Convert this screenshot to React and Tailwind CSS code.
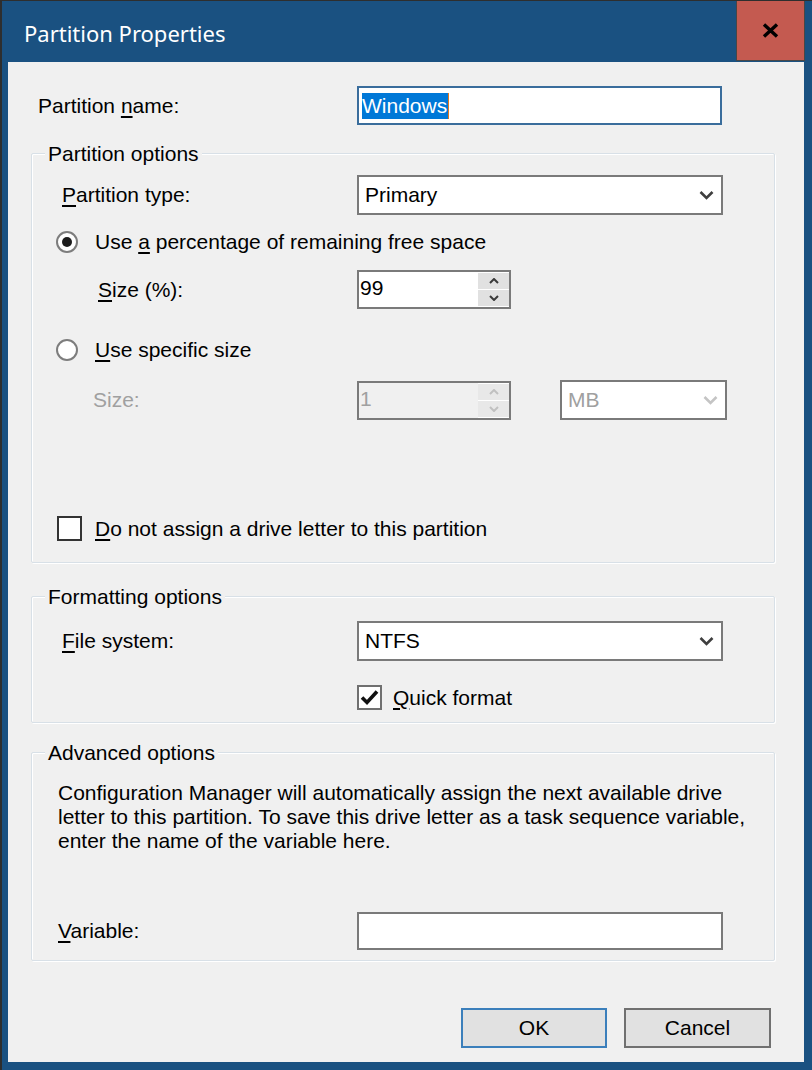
import React from "react";

function U({ children }) {
  return <span className="underline decoration-2 underline-offset-[3px]">{children}</span>;
}

function Chevron({ color = "#404040", up = false, small = false }) {
  if (small) {
    return (
      <svg width="10" height="6" viewBox="0 0 10 6" className="block">
        <path d={up ? "M1 5 L5 1 L9 5" : "M1 1 L5 5 L9 1"} fill="none" stroke={color} strokeWidth="2" />
      </svg>
    );
  }
  return (
    <svg width="15" height="10" viewBox="0 0 15 10" className="block">
      <path d="M1.5 2 L7.5 8 L13.5 2" fill="none" stroke={color} strokeWidth="2.6" />
    </svg>
  );
}

function Combo({ value, width = "w-[366px]", disabled = false }) {
  return (
    <div
      className={`${width} h-[40px] border-2 border-[#7a7a7a] bg-white flex items-center pl-[6px] pr-[7px] ${
        disabled ? "text-[#a0a0a0]" : "text-black"
      }`}
    >
      <span className="flex-1">{value}</span>
      <Chevron color={disabled ? "#c4c4c4" : "#3f3f3f"} />
    </div>
  );
}

function Spinner({ value, disabled = false }) {
  return (
    <div
      className={`w-[154px] h-[39px] border-2 border-[#7a7a7a] flex ${
        disabled ? "bg-[#f0f0f0] text-[#a0a0a0]" : "bg-white text-black"
      }`}
    >
      <div className="flex-1 flex items-center pl-[1px] pb-[3px]">{value}</div>
      <div className="w-[31px] flex flex-col gap-[1px] py-[1px] bg-white">
        <div className={`flex-1 flex items-center justify-center ${disabled ? "bg-[#e8e8e8]" : "bg-[#e1e1e1]"}`}>
          <Chevron small up color={disabled ? "#c0c0c0" : "#3a3a3a"} />
        </div>
        <div className={`flex-1 flex items-center justify-center ${disabled ? "bg-[#e8e8e8]" : "bg-[#e1e1e1]"}`}>
          <Chevron small color={disabled ? "#c0c0c0" : "#3a3a3a"} />
        </div>
      </div>
    </div>
  );
}

function Radio({ checked }) {
  return (
    <div className="w-[22px] h-[22px] rounded-full border-2 border-[#7d7d7d] bg-white flex items-center justify-center">
      {checked && <div className="w-[10px] h-[10px] rounded-full bg-[#1c1c1c]" />}
    </div>
  );
}

function Checkbox({ checked, border = "border-[#333333]" }) {
  return (
    <div className={`w-[25px] h-[25px] border-2 ${border} bg-white flex items-center justify-center`}>
      {checked && (
        <svg width="19" height="17" viewBox="0 0 19 17" className="block">
          <path d="M2 8.5 L7 13.5 L17 2.5" fill="none" stroke="#111" strokeWidth="3.6" />
        </svg>
      )}
    </div>
  );
}

function Group({ title, height, children }) {
  return (
    <div
      className={`relative ml-[23px] w-[744px] ${height} border border-[#d8e0e7] rounded-[2px] shadow-[inset_1px_1px_0_#ffffff,1px_1px_0_#ffffff]`}
    >
      <span className="absolute -top-[12px] left-[13px] px-[3px] bg-[#f0f0f0] leading-[24px]">{title}</span>
      {children}
    </div>
  );
}

export default function App() {
  return (
    <div className="w-[812px] h-[1070px] bg-[#1a5181] border-l-2 border-t border-[#2e2e2e] flex flex-col font-['Liberation_Sans',Arial,sans-serif] text-[21px] leading-[24px] text-black overflow-hidden">
      {/* title bar */}
      <div className="h-[61px] flex shrink-0">
        <div className="flex-1 flex items-center pl-[22px] pt-[3px] text-white text-[22px] font-['Noto_Sans',sans-serif]">
          Partition Properties
        </div>
        <div className="w-[69px] h-[60px] bg-[#c45a50] border-l border-b border-r border-[#474747] flex items-center justify-center">
          <svg width="17" height="15" viewBox="0 0 17 15" className="block">
            <path d="M2 1.5 L15 13.5 M15 1.5 L2 13.5" stroke="#000" strokeWidth="3.4" />
          </svg>
        </div>
        <div className="w-[7px]" />
      </div>

      {/* client area */}
      <div className="ml-[6px] w-[796px] h-[1000px] bg-[#f0f0f0] flex flex-col shrink-0">
        {/* name */}
        <div className="mt-[24px] h-[39px] flex items-center">
          <div className="pl-[30px] w-[349px]">
            Partition <U>n</U>ame:
          </div>
          <div className="w-[365px] h-[39px] border-2 border-[#3a6d9c] bg-white flex items-center pl-[3px]">
            <span className="bg-[#0078d7] text-white h-[26px] leading-[26px] pr-[1px] border-r border-[#e0781f]">
              Windows
            </span>
          </div>
        </div>

        {/* partition options */}
        <div className="mt-[28px]">
          <Group title="Partition options" height="h-[410px]">
            <div className="flex flex-col">
              <div className="mt-[21px] h-[40px] flex items-center">
                <div className="pl-[30px] w-[325px]">
                  <U>P</U>artition type:
                </div>
                <Combo value="Primary" />
              </div>

              <div className="mt-[16px] h-[22px] flex items-center">
                <div className="ml-[24px]">
                  <Radio checked />
                </div>
                <div className="ml-[17px]">
                  Use <U>a</U> percentage of remaining free space
                </div>
              </div>

              <div className="mt-[17px] h-[39px] flex items-center">
                <div className="pl-[66px] w-[325px]">
                  <U>S</U>ize (%):
                </div>
                <Spinner value="99" />
              </div>

              <div className="mt-[30px] h-[22px] flex items-center">
                <div className="ml-[24px]">
                  <Radio />
                </div>
                <div className="ml-[17px]">
                  <U>U</U>se specific size
                </div>
              </div>

              <div className="mt-[19px] h-[40px] flex items-center">
                <div className="pl-[61px] w-[325px] text-[#a0a0a0]">Size:</div>
                <Spinner value="1" disabled />
                <div className="ml-[49px]">
                  <Combo value="MB" width="w-[167px]" disabled />
                </div>
              </div>

              <div className="mt-[96px] h-[25px] flex items-center">
                <div className="ml-[25px]">
                  <Checkbox />
                </div>
                <div className="ml-[13px]">
                  <U>D</U>o not assign a drive letter to this partition
                </div>
              </div>
            </div>
          </Group>
        </div>

        {/* formatting options */}
        <div className="mt-[33px]">
          <Group title="Formatting options" height="h-[127px]">
            <div className="flex flex-col">
              <div className="mt-[24px] h-[40px] flex items-center">
                <div className="pl-[30px] w-[325px]">
                  <U>F</U>ile system:
                </div>
                <Combo value="NTFS" />
              </div>
              <div className="mt-[24px] h-[25px] flex items-center">
                <div className="ml-[325px]">
                  <Checkbox checked border="border-[#707070]" />
                </div>
                <div className="ml-[11px]">
                  <U>Q</U>uick format
                </div>
              </div>
            </div>
          </Group>
        </div>

        {/* advanced options */}
        <div className="mt-[29px]">
          <Group title="Advanced options" height="h-[209px]">
            <div className="flex flex-col">
              <p className="mt-[28px] pl-[26px] whitespace-nowrap">
                Configuration Manager will automatically assign the next available drive
                <br />
                letter to this partition. To save this drive letter as a task sequence variable,
                <br />
                enter the name of the variable here.
              </p>
              <div className="mt-[59px] h-[38px] flex items-center">
                <div className="pl-[26px] w-[325px]">
                  <U>V</U>ariable:
                </div>
                <div className="w-[366px] h-[38px] border-2 border-[#7a7a7a] bg-white" />
              </div>
            </div>
          </Group>
        </div>

        {/* buttons */}
        <div className="mt-[47px] flex justify-end pr-[33px] gap-[17px]">
          <button className="w-[146px] h-[40px] border-2 border-[#3b7fbb] bg-[#e1e1e1] flex items-center justify-center">
            OK
          </button>
          <button className="w-[147px] h-[40px] border-2 border-[#707070] bg-[#e1e1e1] flex items-center justify-center">
            Cancel
          </button>
        </div>
      </div>
    </div>
  );
}
